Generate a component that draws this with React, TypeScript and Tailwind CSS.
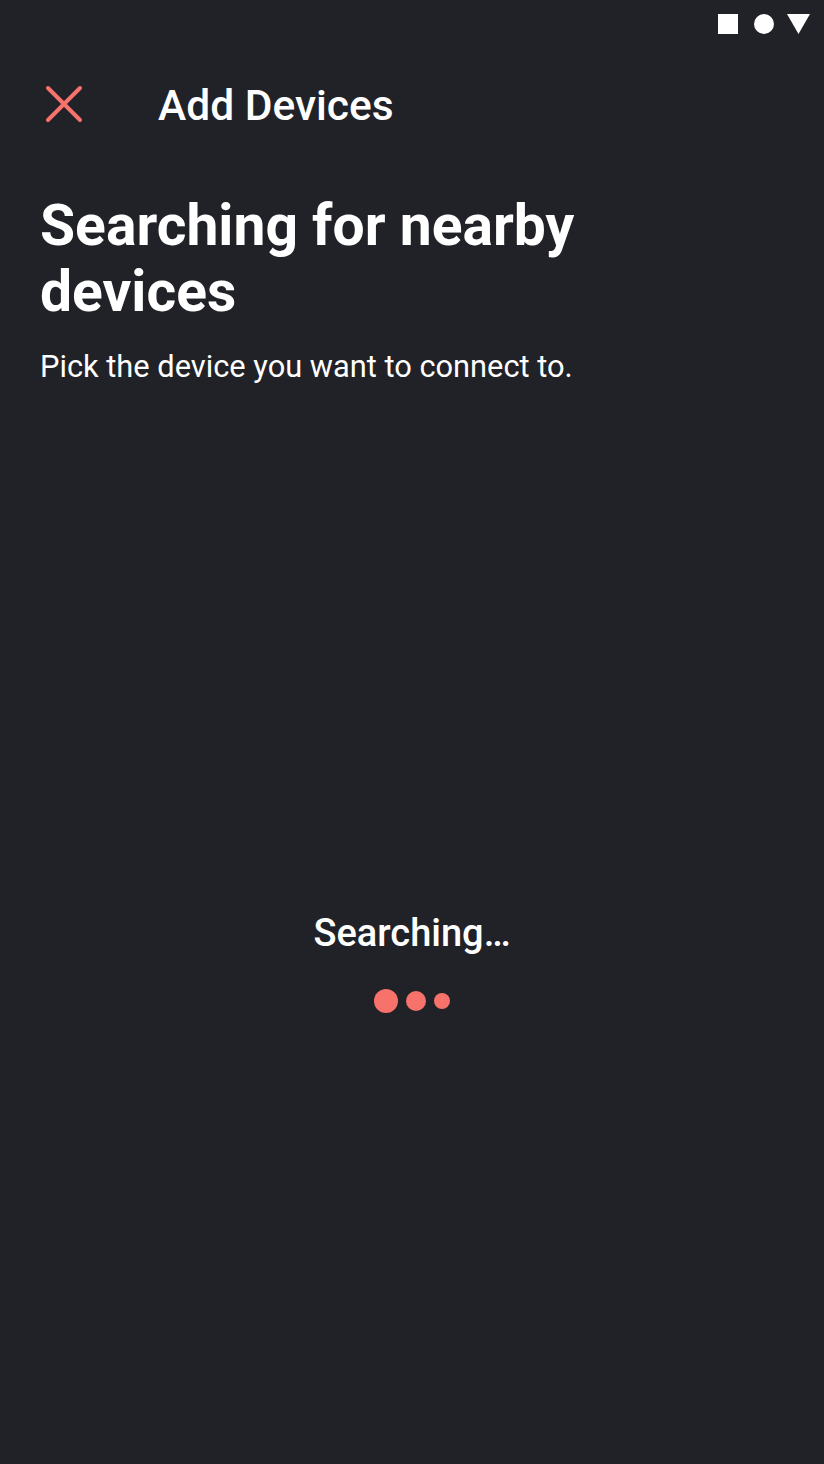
import React from 'react';

const accent = 'bg-[#f7726a]';

const StatusBar = () => (
  <div className="flex h-[48px] items-center justify-end pr-[14px]">
    <div className="h-[20px] w-[20px] bg-white" />
    <div className="ml-[16px] h-[20px] w-[20px] rounded-full bg-white" />
    <svg className="ml-[13px]" width="23" height="20" viewBox="0 0 23 20">
      <polygon points="0,0 23,0 11.5,20" fill="#ffffff" />
    </svg>
  </div>
);

const CloseIcon = () => (
  <svg width="40" height="40" viewBox="0 0 40 40" fill="none">
    <path d="M4 4 L36 36 M36 4 L4 36" stroke="#f7726a" strokeWidth="4" strokeLinecap="round" />
  </svg>
);

export default function App() {
  return (
    <div className="flex min-h-[1464px] w-full flex-col bg-[#212227] font-['Roboto',sans-serif] text-white">
      <StatusBar />

      {/* toolbar */}
      <div className="flex h-[116px] items-center pl-[44px] pb-[4px]">
        <CloseIcon />
        <h1 className="ml-[74px] pt-[4px] text-[42.5px] font-medium">Add Devices</h1>
      </div>

      <div className="px-[40px]">
        <h2 className="mt-[29px] text-[57px] font-bold leading-[66px]">
          Searching for nearby
          <br />
          devices
        </h2>
        <p className="mt-[22px] text-[30.8px] leading-[40px]">Pick the device you want to connect to.</p>
      </div>

      <div className="mt-[524px] flex flex-col items-center">
        <div className="text-[38px] font-medium leading-[44px]">Searching…</div>
        <div className="mt-[34px] flex items-center gap-[8px]">
          <div className={`h-[24px] w-[24px] rounded-full ${accent}`} />
          <div className={`h-[20px] w-[20px] rounded-full ${accent}`} />
          <div className={`h-[16px] w-[16px] rounded-full ${accent}`} />
        </div>
      </div>
    </div>
  );
}
